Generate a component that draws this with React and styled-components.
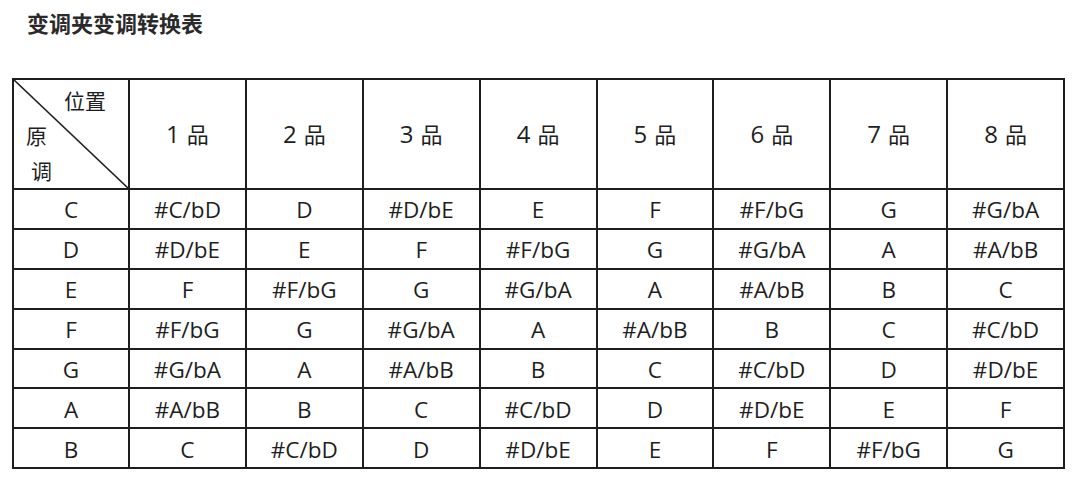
import React from "react";
import styled, { createGlobalStyle } from "styled-components";

const GlobalStyle = createGlobalStyle`
  body {
    margin: 0;
    background: #fff;
    font-family: "Open Sans", "Noto Sans CJK SC", sans-serif;
    color: #1e1e1e;
  }
`;

const Page = styled.div`
  width: 1080px;
  height: 483px;
  padding: 7px 0 0 12px;
  box-sizing: border-box;
`;

const Title = styled.h1`
  margin: 0 0 0 15px;
  font-family: "Noto Sans CJK SC", sans-serif;
  font-size: 22px;
  font-weight: 700;
  line-height: 30px;
  color: #2a2a2a;
`;

const Table = styled.table`
  margin-top: 41px;
  width: 1053px;
  border-collapse: collapse;
  table-layout: fixed;
  border: 2px solid #1e1e1e;
`;

const Cell = styled.td`
  border: 2px solid #1e1e1e;
  padding: ${(p) => (p.$head ? "0" : "3px 0 0")};
  height: ${(p) => (p.$head ? 108 : 34.9)}px;
  text-align: center;
  vertical-align: middle;
  font-size: 22.5px;
  line-height: 1;
  font-family: "Open Sans", "Noto Sans CJK SC", sans-serif;
  color: #1e1e1e;
`;

const Fret = styled.span`
  font-size: 24px;
  span {
    font-family: "Noto Sans CJK SC", sans-serif;
    font-size: 22px;
    margin-left: 7px;
  }
`;

const Corner = styled(Cell)`
  position: relative;
  text-align: left;
  font-family: "Noto Sans CJK SC", sans-serif;
  font-size: 21px;
  svg {
    position: absolute;
    inset: 0;
    width: 100%;
    height: 100%;
  }
`;

const CornerStack = styled.div`
  display: flex;
  flex-direction: column;
  height: 108px;
  padding: 3px 0 0 12px;
  box-sizing: border-box;
  line-height: 35px;
`;

const CornerLine = styled.div`
  padding-left: ${(p) => p.$indent || 0}px;
`;

const notes = ["C", "D", "E", "F", "G", "A", "B"];

const rows = [
  ["C", "#C/bD", "D", "#D/bE", "E", "F", "#F/bG", "G", "#G/bA"],
  ["D", "#D/bE", "E", "F", "#F/bG", "G", "#G/bA", "A", "#A/bB"],
  ["E", "F", "#F/bG", "G", "#G/bA", "A", "#A/bB", "B", "C"],
  ["F", "#F/bG", "G", "#G/bA", "A", "#A/bB", "B", "C", "#C/bD"],
  ["G", "#G/bA", "A", "#A/bB", "B", "C", "#C/bD", "D", "#D/bE"],
  ["A", "#A/bB", "B", "C", "#C/bD", "D", "#D/bE", "E", "F"],
  ["B", "C", "#C/bD", "D", "#D/bE", "E", "F", "#F/bG", "G"],
];

export default function App() {
  return (
    <Page>
      <GlobalStyle />
      <Title>变调夹变调转换表</Title>
      <Table>
        <colgroup>
          <col style={{ width: 116 }} />
          {[1, 2, 3, 4, 5, 6, 7, 8].map((n) => (
            <col key={n} />
          ))}
        </colgroup>
        <tbody>
          <tr>
            <Corner $head>
              <svg viewBox="0 0 100 100" preserveAspectRatio="none">
                <line
                  x1="0"
                  y1="0"
                  x2="100"
                  y2="100"
                  stroke="#1e1e1e"
                  strokeWidth="1.6"
                  vectorEffect="non-scaling-stroke"
                />
              </svg>
              <CornerStack>
                <CornerLine $indent={38}>位置</CornerLine>
                <CornerLine>原</CornerLine>
                <CornerLine $indent={5}>调</CornerLine>
              </CornerStack>
            </Corner>
            {[1, 2, 3, 4, 5, 6, 7, 8].map((n) => (
              <Cell key={n} $head>
                <Fret>
                  {n}
                  <span>品</span>
                </Fret>
              </Cell>
            ))}
          </tr>
          {rows.map((r, i) => (
            <tr key={notes[i]}>
              {r.map((v, j) => (
                <Cell key={j}>{v}</Cell>
              ))}
            </tr>
          ))}
        </tbody>
      </Table>
    </Page>
  );
}
